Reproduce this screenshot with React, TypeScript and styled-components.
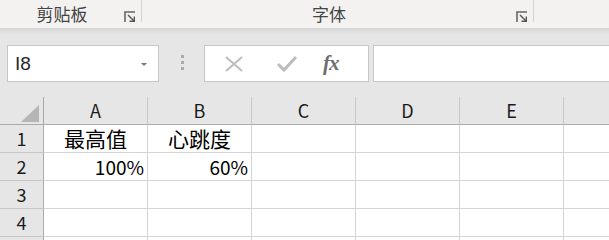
import React from 'react';
import styled, { createGlobalStyle } from 'styled-components';

const GlobalStyle = createGlobalStyle`
  html, body {
    margin: 0;
    padding: 0;
    background: #ffffff;
    overflow: hidden;
  }
  body {
    font-family: 'Noto Sans CJK SC', 'Liberation Sans', sans-serif;
  }
`;

const Page = styled.div`
  width: 609px;
  height: 240px;
  overflow: hidden;
  display: flex;
  flex-direction: column;
`;

/* ribbon group labels */

const Ribbon = styled.div`
  height: 28px;
  flex: none;
  display: flex;
  background: #f3f2f1;
`;

const RibbonGroup = styled.div<{ width: number }>`
  width: ${({ width }) => width}px;
  flex: none;
  display: flex;
  align-items: flex-start;
`;

const GroupLabel = styled.span`
  flex: 1;
  text-align: center;
  font-family: 'Noto Sans CJK SC', sans-serif;
  font-size: 17px;
  line-height: 30px;
  color: #444444;
  margin-top: -1px;
`;

const LauncherIcon = styled.svg`
  width: 12px;
  height: 12px;
  margin-top: 11px;
  margin-right: 5px;
  flex: none;
`;

const GroupSep = styled.div`
  width: 1px;
  height: 22px;
  background: #d2d2d2;
  flex: none;
`;

const Launcher = () => (
  <LauncherIcon viewBox="0 0 12 12">
    <polyline points="1,11 1,1 11,1" fill="none" stroke="#666" strokeWidth="1.6" />
    <line x1="4" y1="4" x2="10" y2="10" stroke="#555" strokeWidth="1.4" />
    <polyline points="5.5,10.3 10.3,10.3 10.3,5.5" fill="none" stroke="#555" strokeWidth="1.4" />
  </LauncherIcon>
);

/* formula bar */

const FormulaArea = styled.div`
  flex: none;
  height: 69px;
  background: linear-gradient(#d4d4d4 0px, #e2e2e2 4px, #e6e6e6 7px);
  padding: 17px 0 0 7px;
  box-sizing: border-box;
`;

const FormulaRow = styled.div`
  height: 37px;
  display: flex;
  align-items: stretch;
`;

const Field = styled.div<{ width?: number }>`
  ${({ width }) => (width ? `width: ${width}px; flex: none;` : 'flex: 1;')}
  box-sizing: border-box;
  border: 1px solid #c6c6c6;
  border-right-width: ${({ width }) => (width ? 1 : 0)}px;
  background: #ffffff;
  display: flex;
  align-items: center;
`;

const NameText = styled.span`
  flex: 1;
  padding-left: 7px;
  font-family: 'Liberation Sans', sans-serif;
  font-size: 19px;
  color: #262626;
`;

const DropArrow = styled.span`
  width: 0;
  height: 0;
  border-left: 3px solid transparent;
  border-right: 3px solid transparent;
  border-top: 3px solid #777777;
  margin-right: 11px;
  margin-top: 1px;
`;

const Grip = styled.div`
  width: 45px;
  flex: none;
  display: flex;
  flex-direction: column;
  align-items: center;
  padding-top: 10px;
  gap: 3px;
  box-sizing: border-box;
  padding-left: 1px;
`;

const GripDot = styled.span`
  width: 3px;
  height: 3px;
  background: #a9a9a9;
`;

const ActionIcon = styled.svg`
  width: 22px;
  height: 20px;
  flex: none;
`;

const Fx = styled.span`
  font-family: 'Liberation Serif', serif;
  font-style: italic;
  font-weight: bold;
  font-size: 21px;
  color: #6e6e6e;
  letter-spacing: -1px;
  margin-left: 25px;
`;

const Gap = styled.div<{ width: number }>`
  width: ${({ width }) => width}px;
  flex: none;
`;

/* sheet grid */

const Sheet = styled.div`
  display: grid;
  grid-template-columns: 44px repeat(6, 104px);
  grid-auto-rows: 28px;
`;

const HeadCell = styled.div<{ corner?: boolean; rowHead?: boolean }>`
  box-sizing: border-box;
  background: #e6e6e6;
  border-right: 1px solid ${({ rowHead, corner }) => (rowHead || corner ? '#ababab' : '#c8c8c8')};
  border-bottom: 1px solid ${({ rowHead }) => (rowHead ? '#c8c8c8' : '#ababab')};
  font-size: 18px;
  line-height: 27px;
  color: #1a1a1a;
  text-align: center;
  position: relative;
`;

const CornerMark = styled.svg`
  position: absolute;
  right: 4px;
  bottom: 2px;
  width: 18px;
  height: 17px;
`;

const Cell = styled.div<{ align?: 'left' | 'center' | 'right'; size?: number }>`
  box-sizing: border-box;
  background: #ffffff;
  border-right: 1px solid #d4d4d4;
  border-bottom: 1px solid #d4d4d4;
  font-size: ${({ size }) => size ?? 19}px;
  line-height: 27px;
  color: #000000;
  text-align: ${({ align }) => align ?? 'left'};
  padding: 0 3px;
  white-space: nowrap;
`;

// column F and row 5 only peek in at the edges, their labels are out of view
const columns = ['A', 'B', 'C', 'D', 'E', 'F'];
const rows = [1, 2, 3, 4, 5];
const visibleLetter = (c: string) => (c === 'F' ? '' : c);
const visibleRow = (r: number) => (r === 5 ? '' : r);

type CellData = { text: string; align: 'center' | 'right'; size: number };

const data: Record<number, Record<string, CellData>> = {
  1: {
    A: { text: '最高值', align: 'center', size: 21 },
    B: { text: '心跳度', align: 'center', size: 21 },
  },
  2: {
    A: { text: '100%', align: 'right', size: 19 },
    B: { text: '60%', align: 'right', size: 19 },
  },
};

export default function App() {
  return (
    <Page>
      <GlobalStyle />
      <Ribbon>
        <RibbonGroup width={141}>
          <GroupLabel>剪贴板</GroupLabel>
          <Launcher />
        </RibbonGroup>
        <GroupSep />
        <RibbonGroup width={391}>
          <GroupLabel>字体</GroupLabel>
          <Launcher />
        </RibbonGroup>
        <GroupSep />
      </Ribbon>

      <FormulaArea>
        <FormulaRow>
          <Field width={152}>
            <NameText>I8</NameText>
            <DropArrow />
          </Field>
          <Grip>
            <GripDot />
            <GripDot />
            <GripDot />
          </Grip>
          <Field width={165}>
            <Gap width={18} />
            <ActionIcon viewBox="0 0 22 20">
              <path d="M3 3 L19 17 M19 3 L3 17" stroke="#bdbdbd" strokeWidth="2" fill="none" />
            </ActionIcon>
            <Gap width={31} />
            <ActionIcon viewBox="0 0 22 20">
              <path d="M2 10 L8 16 L20 3" stroke="#bdbdbd" strokeWidth="3" fill="none" />
            </ActionIcon>
            <Fx>fx</Fx>
          </Field>
          <Gap width={4} />
          <Field />
        </FormulaRow>
      </FormulaArea>

      <Sheet>
        <HeadCell corner>
          <CornerMark viewBox="0 0 18 17">
            <polygon points="18,0 18,17 0,17" fill="#b5b5b5" />
          </CornerMark>
        </HeadCell>
        {columns.map((c) => (
          <HeadCell key={c}>{visibleLetter(c)}</HeadCell>
        ))}
        {rows.map((r) => (
          <React.Fragment key={r}>
            <HeadCell rowHead>{visibleRow(r)}</HeadCell>
            {columns.map((c) => {
              const d = data[r]?.[c];
              return (
                <Cell key={c} align={d?.align} size={d?.size}>
                  {d?.text}
                </Cell>
              );
            })}
          </React.Fragment>
        ))}
      </Sheet>
    </Page>
  );
}
